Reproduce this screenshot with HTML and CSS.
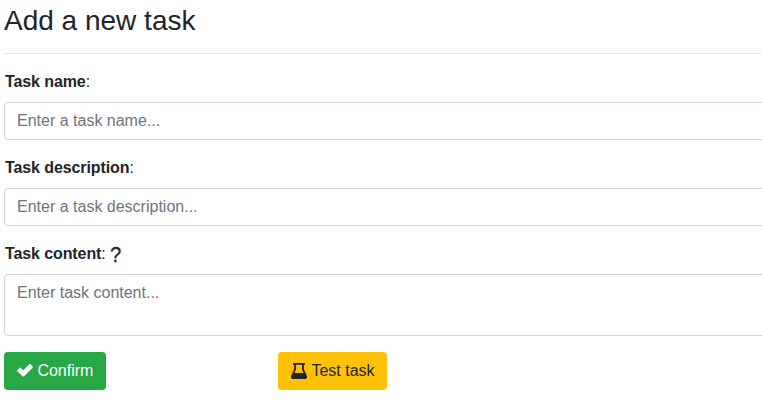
FILE: index.html
```html
<!DOCTYPE html>
<html lang="en">
<head>
<meta charset="utf-8">
<title>Add a new task</title>
<link rel="stylesheet" href="styles.css">
</head>
<body>
<form class="task-form">
  <h3 class="title">Add a new task</h3>
  <hr class="divider">
  <div class="group">
    <label class="label" for="name"><b>Task name</b>:</label>
    <input class="control" id="name" type="text" placeholder="Enter a task name...">
  </div>
  <div class="group">
    <label class="label" for="description"><b>Task description</b>:</label>
    <input class="control" id="description" type="text" placeholder="Enter a task description...">
  </div>
  <div class="group">
    <label class="label with-help" for="content"><span><b>Task content</b>:</span><span class="help">?</span></label>
    <textarea class="control area" id="content" rows="2" placeholder="Enter task content..."></textarea>
  </div>
  <div class="actions">
    <button class="btn confirm" type="button"><svg class="icon" viewBox="0 0 16 16"><path d="M.2 7.200 2.400 4.900Q3.100 4.300 3.800 4.900L6.200 7.300 12.200 1.300Q12.900.7 13.600 1.300L15.700 3.500Q16.100 4.100 15.600 4.700L7 13.200Q6.200 13.900 5.500 13.200L.2 8.300Q-.2 7.700.2 7.200z"/></svg>Confirm</button>
    <button class="btn test" type="button"><svg class="icon" viewBox="0 0 16 16"><path fill-rule="evenodd" d="M2 0h12v1.700h-1.100v4.500l2.800 6.400c.9 2-.1 3.400-1.600 3.400H1.900c-1.500 0-2.500-1.400-1.600-3.400l2.800-6.400V1.700H2zM5 1.700v4.800L3.400 10h9.200L11 6.500V1.700z"/></svg>Test task</button>
  </div>
</form>
</body>
</html>
```

FILE: styles.css
```css
* { box-sizing: border-box; }

body {
  margin: 0;
  background: #fff;
  color: #212529;
  font: 16px/1.5 "Liberation Sans", Arial, sans-serif;
  overflow: hidden;
}

.task-form {
  width: 800px;
  padding: 4px 0 0 4px;
}

.title {
  margin: 0 0 15px;
  font-size: 28px;
  font-weight: 500;
  line-height: 34px;
}

.divider {
  margin: 0 0 16px;
  border: 0;
  border-top: 1px solid rgba(0, 0, 0, .1);
}

.group { margin-bottom: 16px; }

.label {
  display: block;
  height: 24px;
  margin: 0 0 8px 1px;
}

.label b { letter-spacing: -.1px; }

.with-help {
  display: flex;
  gap: 4px;
}

.help {
  font-size: 22px;
  line-height: 26px;
  -webkit-text-stroke: .3px currentColor;
  transform: scaleX(.92);
  transform-origin: left;
}

.control {
  display: block;
  width: 100%;
  height: 38px;
  padding: 6px 12px;
  border: 1px solid #ced4da;
  border-radius: 4px;
  background: #fff;
  color: #495057;
  font: inherit;
}

.control::placeholder {
  color: #6c757d;
  opacity: 1;
}

.area {
  height: 62px;
  resize: none;
}

.actions {
  display: grid;
  grid-template-columns: 274px auto;
  justify-content: start;
  justify-items: start;
}

.btn {
  display: flex;
  align-items: center;
  height: 38px;
  padding: 0 12.600px 0 13px;
  border: 0;
  border-radius: 4px;
  font: inherit;
}

.icon {
  width: 16px;
  height: 16px;
  margin-right: 4.400px;
  fill: currentColor;
}

.confirm {
  background: #28a745;
  color: #fff;
}

.test {
  background: #ffc107;
  color: #212529;
}
```
